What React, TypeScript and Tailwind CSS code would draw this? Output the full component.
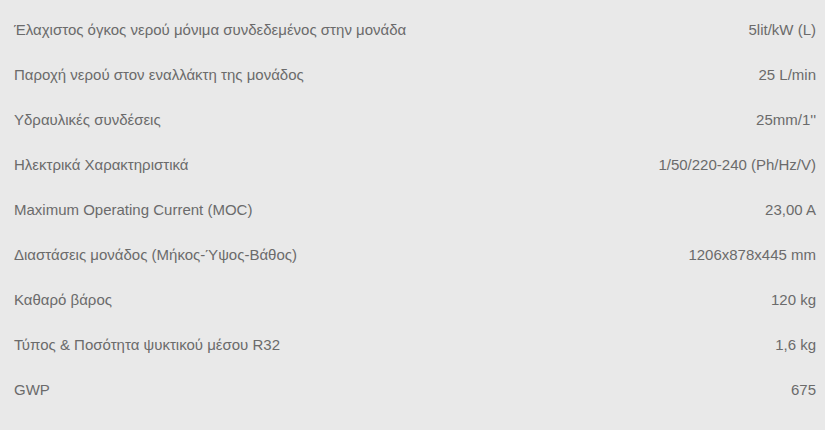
const rows: [string, string][] = [
  ["Έλαχιστος όγκος νερού μόνιμα συνδεδεμένος στην μονάδα", "5lit/kW (L)"],
  ["Παροχή νερού στον εναλλάκτη της μονάδος", "25 L/min"],
  ["Υδραυλικές συνδέσεις", "25mm/1''"],
  ["Ηλεκτρικά Χαρακτηριστικά", "1/50/220-240 (Ph/Hz/V)"],
  ["Maximum Operating Current (MOC)", "23,00 A"],
  ["Διαστάσεις μονάδος (Μήκος-Ύψος-Βάθος)", "1206x878x445 mm"],
  ["Καθαρό βάρος", "120 kg"],
  ["Τύπος & Ποσότητα ψυκτικού μέσου R32", "1,6 kg"],
  ["GWP", "675"],
];

export default function App() {
  return (
    <div className="w-[825px] h-[430px] bg-[#e9e9e9] pt-[8px] font-['Liberation_Sans',Arial,sans-serif] text-[15px] text-[#6b6b6b]">
      {rows.map(([label, value]) => (
        <div key={label} className="flex h-[45px] items-center justify-between pl-[14px] pr-[9px]">
          <span>{label}</span>
          <span>{value}</span>
        </div>
      ))}
    </div>
  );
}
